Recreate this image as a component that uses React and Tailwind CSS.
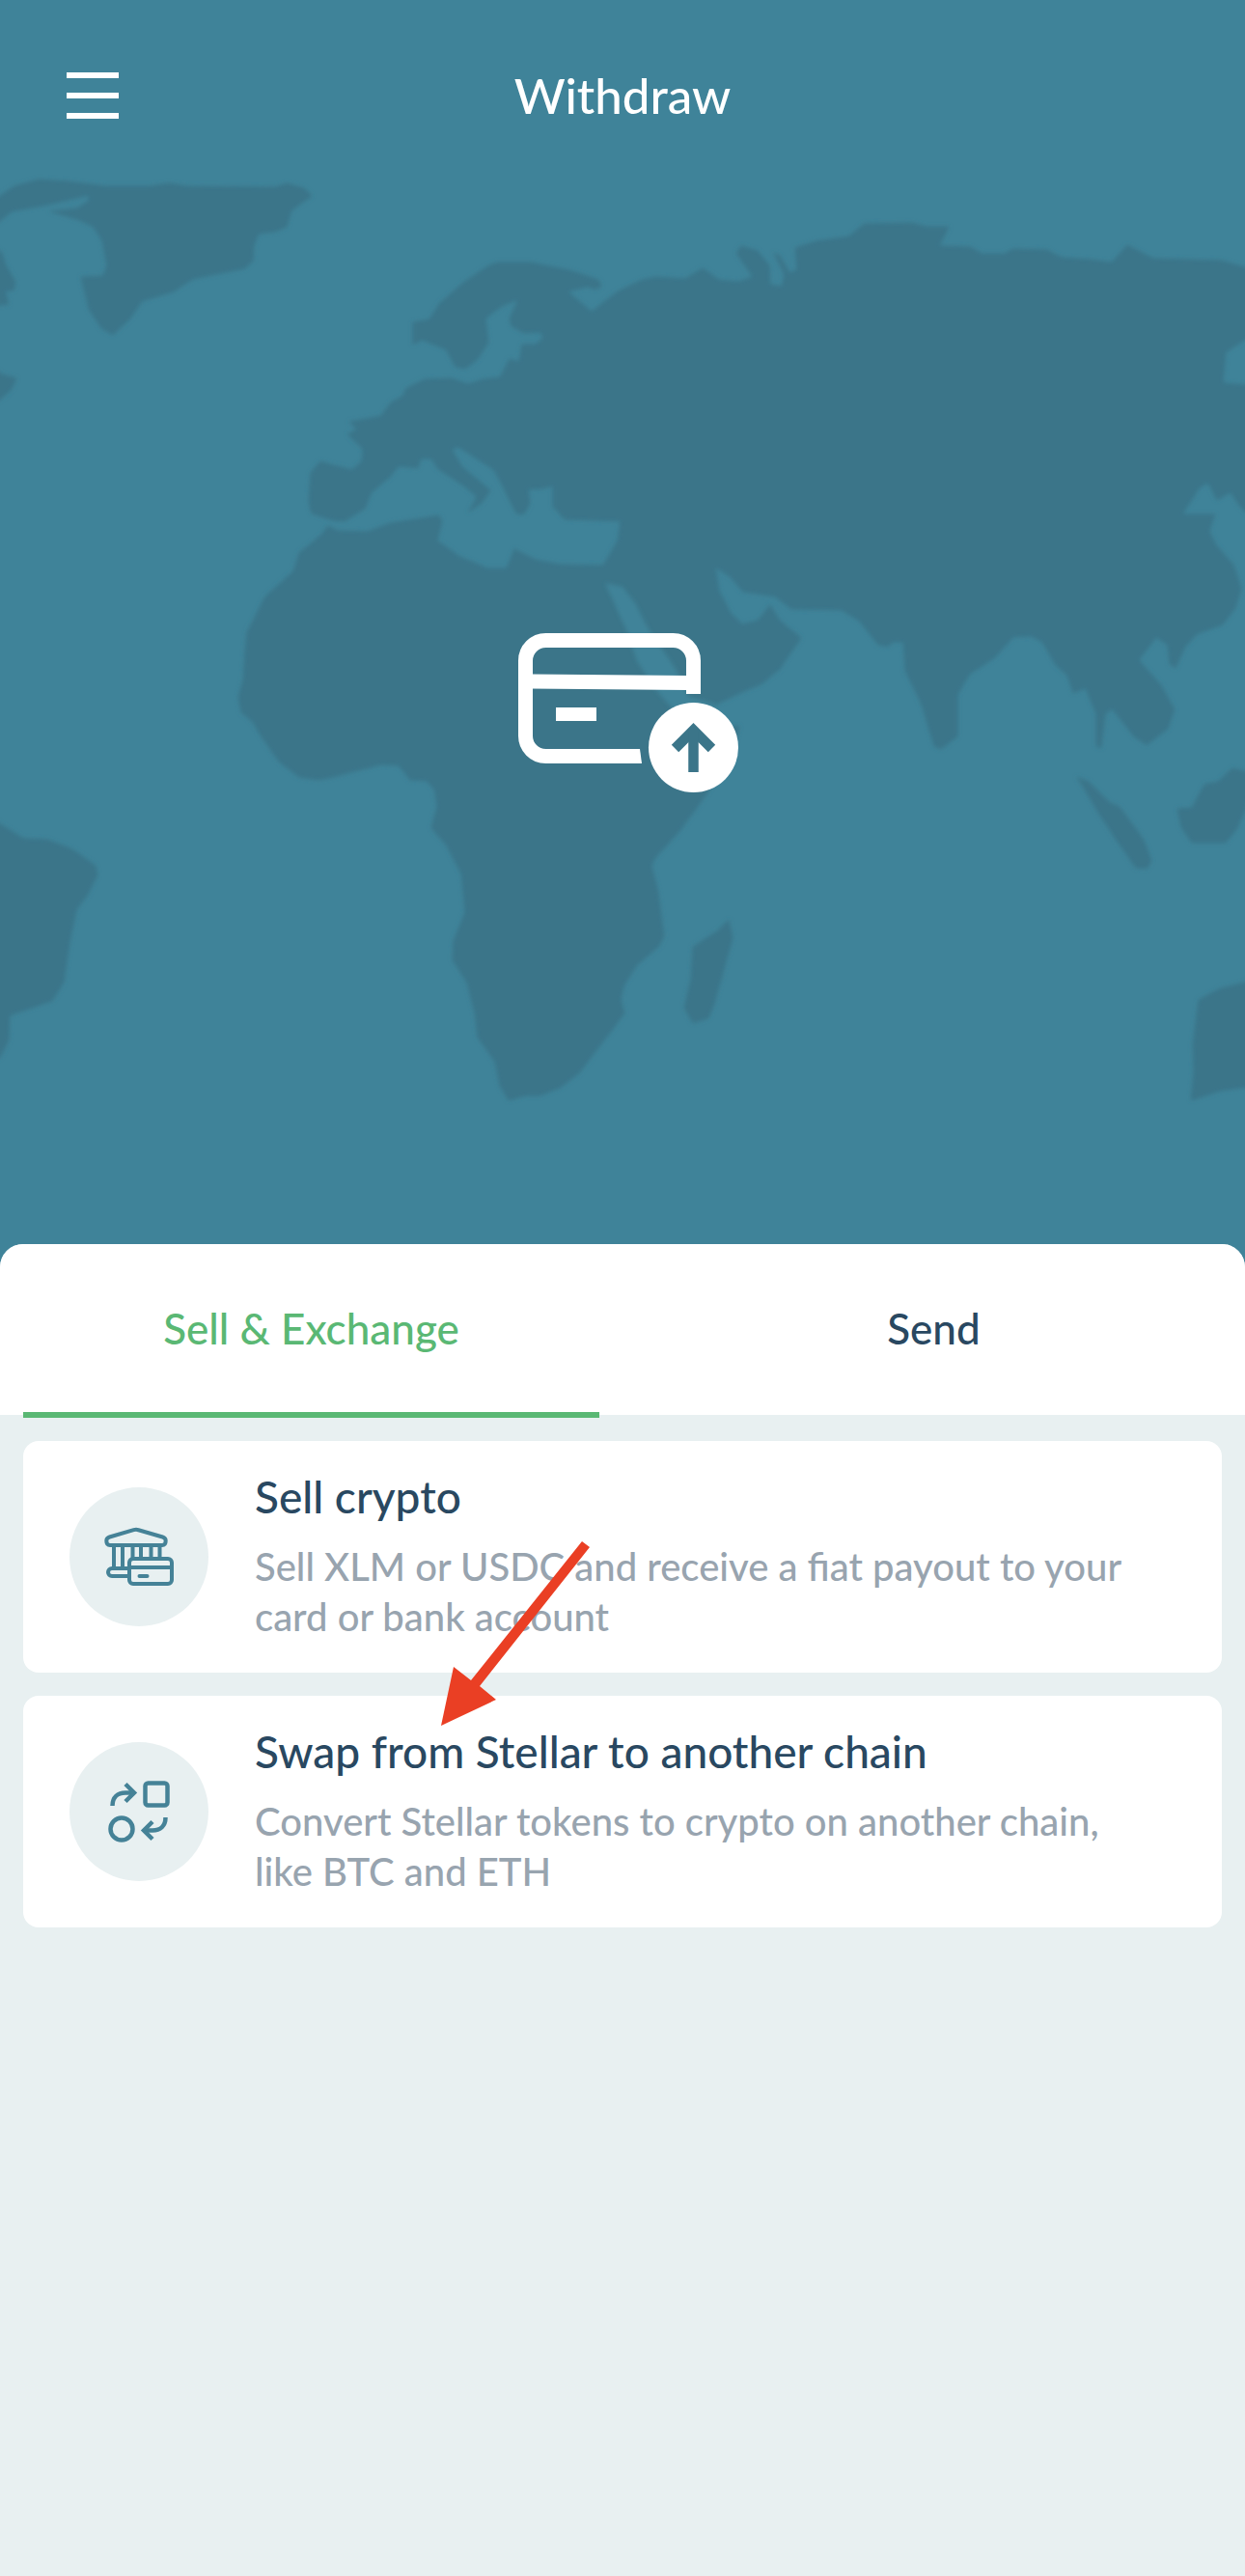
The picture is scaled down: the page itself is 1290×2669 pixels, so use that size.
import React, { useState } from "react";

function WorldMap() {
  return (
    <svg
      className="pointer-events-none absolute inset-0 h-full w-full"
      viewBox="0 0 1290 1289"
      preserveAspectRatio="xMidYMid slice"
      aria-hidden="true"
    >
      <defs>
        <filter id="soften" x="-5%" y="-5%" width="110%" height="110%">
          <feGaussianBlur stdDeviation="2" />
        </filter>
      </defs>
      <g filter="url(#soften)" fill="#3b7589" stroke="#3b7589" strokeWidth="1" strokeLinejoin="round">
        {/* Greenland and the Canadian islands */}
        <path d="M-8 208L0 203L15 193L40 186L70 188L110 193L155 193L175 190L195 193L285 194L297 190L315 195L323 203L302 218L297 235L285 240L268 242L263 255L262 270L254 278L200 289L180 302L147 312L135 330L117 347L105 340L92 320L84 287L107 286L111 275L106 250L97 235L82 228L52 219L80 216L92 208L92 202L50 212L12 219L0 229L-8 233Z" />
        <path d="M-8 255L2 262L6 275L16 292L14 301L5 301L9 315L0 316L-8 318Z" />
        <path d="M-8 380L2 388L17 392L12 403L0 414L-8 418Z" />
        {/* Europe, Asia and Africa */}
        <path d="M428 334L445 331L455 315L480 293L505 276L515 272L550 272L590 280L620 290L623 296L618 300L608 297L588 302L613 323L640 302L665 290L680 287L710 289L728 278L745 290L765 292L780 287L763 262L768 255L785 260L797 275L798 295L810 297L813 285L802 262L808 265L818 283L826 280L824 257L845 250L880 245L895 232L945 231L960 235L983 235L973 255L1005 256L1018 263L1040 263L1050 258L1085 259L1100 267L1130 269L1152 272L1168 254L1195 268L1265 270L1290 277L1300 280L1300 346L1290 352L1270 365L1267 397L1290 399L1300 399L1300 535L1290 530L1283 522L1275 510L1261 518L1252 500L1243 505L1225 533L1259 533L1253 550L1260 565L1278 585L1286 610L1280 630L1267 647L1240 657L1228 670L1218 692L1212 688L1210 668L1198 660L1180 684L1203 710L1217 735L1210 755L1188 772L1175 763L1152 734L1145 740L1141 775L1136 773L1136 740L1125 713L1112 718L1106 700L1093 688L1080 665L1068 659L1050 660L1030 682L1005 698L992 720L992 763L975 776L968 773L955 730L938 695L936 665L925 665L920 670L910 668L890 643L872 632L820 631L803 618L770 613L757 598L741 587L745 612L757 635L769 647L785 643L798 627L808 643L830 661L808 693L790 708L767 718L735 733L742 756L766 752L760 775L732 823L705 860L678 890L675 897L682 925L688 970L683 980L660 1000L647 1020L643 1035L647 1050L632 1070L615 1092L600 1112L580 1127L560 1135L545 1135L527 1140L518 1125L513 1100L495 1075L492 1050L484 1018L469 995L470 975L482 945L478 905L462 875L447 858L453 835L450 818L442 809L425 808L413 793L395 792L345 805L330 808L310 805L290 790L272 765L262 748L250 738L247 722L252 705L254 675L256 655L275 618L304 592L310 573L332 555L340 545L350 550L380 551L405 542L455 534L458 540L453 560L475 576L505 589L525 589L533 569L555 580L580 585L625 586L640 560L643 540L585 538L573 525L573 503L563 506L547 507L549 521L543 533L535 532L518 498L512 487L475 463L468 465L478 483L508 508L500 520L485 531L494 515L483 505L453 485L447 475L436 475L433 485L413 483L403 495L385 510L378 527L357 540L345 539L323 532L320 520L322 490L332 478L345 482L365 487L375 478L376 465L360 450L370 445L362 437L395 431L405 417L418 410L420 403L440 393L468 392L485 398L500 393L518 391L528 372L538 375L541 357L555 357L563 350L560 344L543 345L530 338L528 330L537 310L520 317L503 330L506 355L495 372L482 382L472 380L462 362L437 352L428 357Z" />
        {/* South America */}
        <path d="M-8 848L0 854L25 869L49 870L75 880L99 897L101 907L90 928L79 943L72 977L66 1018L54 1037L10 1052L9 1078L0 1095L-8 1100Z" />
        {/* Madagascar */}
        <path d="M755 953L759 972L740 1040L734 1055L718 1060L709 1044L716 1015L718 981L743 965Z" />
        {/* Indonesia and Australia */}
        <path d="M1116 805L1128 810L1150 832L1160 836L1185 870L1193 892L1188 900L1177 899L1160 875L1140 845Z" />
        <path d="M1220 838L1235 837L1248 813L1262 810L1277 796L1300 802L1290 840L1282 858L1270 873L1235 873L1224 857Z" />
        <path d="M1300 1012L1290 1018L1265 1024L1242 1036L1236 1082L1237 1110L1234 1140L1265 1130L1300 1125Z" />
      </g>
      {/* Red Sea */}
      <path
        filter="url(#soften)"
        fill="#3f8399"
        d="M627 604L645 608L658 625L672 652L700 693L714 722L740 729L738 742L700 738L680 715L660 685L650 655Z"
      />
    </svg>
  );
}

function WithdrawIcon() {
  return (
    <svg className="relative h-[176px] w-[242px]" viewBox="524 656 242 176" fill="none" role="img" aria-label="Withdraw">
      <g stroke="#fff" strokeWidth="15">
        <path d="M718.5 719V684.500a21 21 0 0 0-21-21H565.500a21 21 0 0 0-21 21V762.500a21 21 0 0 0 21 21H663" />
        <path d="M550 706L713 707.500" />
        <path d="M576 740H618" strokeWidth="14" />
      </g>
      <path d="M662 776H663L665 791H662Z" fill="#fff" />
      <circle cx="718.500" cy="774.500" r="46.500" fill="#fff" />
      <g stroke="#3b7589" strokeWidth="10.500">
        <path d="M699.500 775.500L718.500 756.500L737.500 775.500" />
        <path d="M718.500 758V800" />
      </g>
    </svg>
  );
}

function BankIcon() {
  return (
    <svg className="h-full w-full" viewBox="0 0 144 144" fill="none" stroke="#458297" strokeWidth="4" aria-hidden="true">
      <path
        d="M42 60Q38.300 60 38.300 55.500Q38.300 52.500 41.500 51.500L66.500 44.200Q69 43.500 71.500 44.200L96.500 51.500Q99.700 52.500 99.700 55.500Q99.700 60 96 60Z"
        strokeLinejoin="round"
      />
      <path d="M46 60V84M55 60V84M65.500 60V75M74 60V75M84.500 60V75M93.500 60V75" />
      <path d="M62 84H44a4 4 0 0 0 0 8H62" />
      <rect x="62" y="74" width="44" height="26" rx="4" />
      <path d="M62 83H106" />
      <path d="M72.500 92H80.500" strokeLinecap="round" />
    </svg>
  );
}

function SwapIcon() {
  return (
    <svg className="h-full w-full" viewBox="0 0 144 144" fill="none" stroke="#458297" strokeWidth="4.500" aria-hidden="true">
      <rect x="78.500" y="42.500" width="23" height="23" rx="3" />
      <circle cx="54" cy="90" r="11.500" />
      <path d="M44.500 66C44.500 57 50 52.500 58 52.500H66" />
      <path d="M58 43.500L67 52.500L58 61.500" />
      <path d="M99.500 78C99.500 87 94 91.500 86 91.500H78" />
      <path d="M86 82.500L77 91.500L86 100.500" />
    </svg>
  );
}

function PointerArrow() {
  return (
    <svg
      className="pointer-events-none absolute -top-[161px] left-[432px] h-[192px] w-[156px]"
      viewBox="456 1596 156 192"
      fill="#ea3f24"
      aria-hidden="true"
    >
      <path d="M603 1597L611 1603L497 1747L514 1761L457 1788L470 1727L488 1741Z" />
    </svg>
  );
}

const tabs = ["Sell & Exchange", "Send"];

const options = [
  {
    title: "Sell crypto",
    text: "Sell XLM or USDC and receive a fiat payout to your card or bank account",
    Icon: BankIcon,
  },
  {
    title: "Swap from Stellar to another chain",
    text: "Convert Stellar tokens to crypto on another chain, like BTC and ETH",
    Icon: SwapIcon,
    marked: true,
  },
];

export default function App() {
  const [active, setActive] = useState(0);

  return (
    <div className="flex min-h-screen flex-col bg-[#3f8399] font-['Lato',sans-serif] font-medium">
      <section className="relative overflow-hidden">
        <WorldMap />
        <header className="relative flex h-[198px] items-center justify-center">
          <button type="button" aria-label="Open menu" className="absolute left-[69px] flex w-[54px] flex-col gap-[15px]">
            <span className="h-[6px] bg-white" />
            <span className="h-[6px] bg-white" />
            <span className="h-[6px] bg-white" />
          </button>
          <h1 className="text-[51px] leading-[60px] text-white">Withdraw</h1>
        </header>
        <div className="flex justify-center pt-[458px] pb-[457px]">
          <WithdrawIcon />
        </div>
      </section>

      <main className="flex-1 rounded-t-3xl bg-[#e8f0f1]">
        <div role="tablist" className="grid grid-cols-2 rounded-t-3xl bg-white">
          {tabs.map((tab, i) => (
            <button
              key={tab}
              type="button"
              role="tab"
              aria-selected={active === i}
              onClick={() => setActive(i)}
              className={
                active === i
                  ? "relative h-[177px] pb-1 text-[44px] text-[#5ab874]"
                  : "relative h-[177px] pb-1 text-[44px] text-[#294861]"
              }
            >
              {tab}
              {active === i && <span className="absolute inset-x-6 -bottom-[3px] h-[6px] bg-[#5ab874]" />}
            </button>
          ))}
        </div>

        <ul className="flex flex-col gap-6 px-6 py-[27px]">
          {options.map(({ title, text, Icon, marked }) => (
            <li key={title} className="relative">
              <button type="button" className="flex w-full items-center gap-12 rounded-2xl bg-white py-7 pr-20 pl-12 text-left">
                <span className="size-[144px] shrink-0 rounded-full bg-[#e8f0f1]">
                  <Icon />
                </span>
                <span className="block pb-1">
                  <span className="block text-[46px] leading-[60px] text-[#294861]">{title}</span>
                  <span className="mt-4 block text-[40px] leading-[52px] text-[#98a4af]">{text}</span>
                </span>
              </button>
              {marked && <PointerArrow />}
            </li>
          ))}
        </ul>
      </main>
    </div>
  );
}
